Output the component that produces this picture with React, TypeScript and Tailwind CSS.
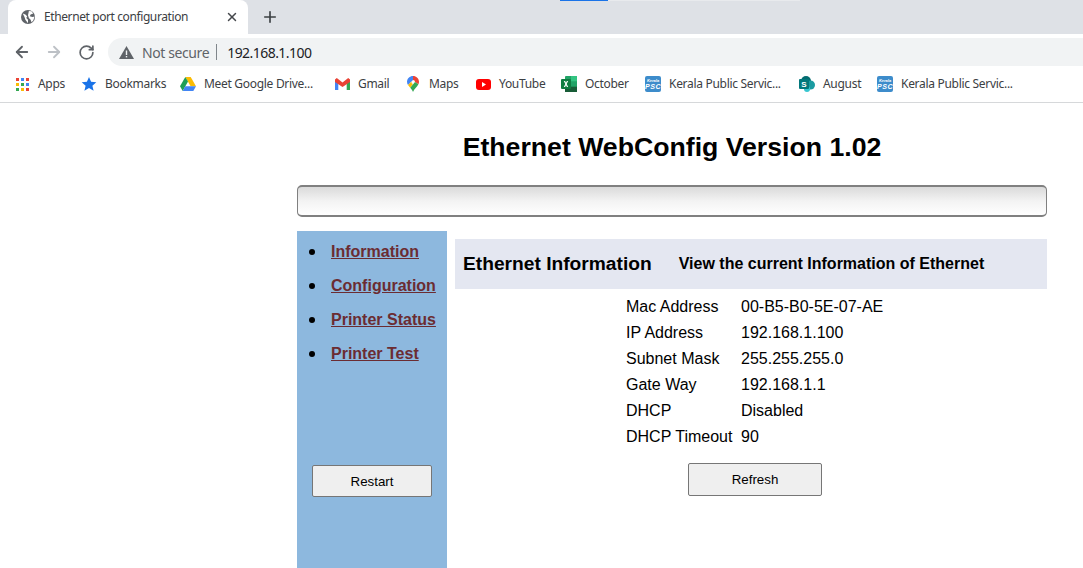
import React from 'react';
import { ArrowLeft, ArrowRight, RotateCw, Plus, X } from 'lucide-react';

const chromeFont = "font-['Noto_Sans','Open_Sans',sans-serif]";

const AppsIcon = () => {
  const colors = ['#ea4335', '#4285f4', '#ea4335', '#fbbc04', '#34a853', '#4285f4', '#34a853', '#fbbc04', '#ea4335'];
  return (
    <div className="grid w-[13px] h-[13px] grid-cols-3 gap-[2px]">
      {colors.map((c, i) => (
        <span key={i} className="block w-[3px] h-[3px]" style={{ backgroundColor: c }} />
      ))}
    </div>
  );
};

const StarIcon = () => (
  <svg width="16" height="16" viewBox="0 0 16 16">
    <path d="M8 1l2.100 4.800 5.200.5-3.900 3.400 1.200 5.100L8 12.100l-4.600 2.700 1.200-5.100L.7 6.300l5.200-.5z" fill="#1a73e8" />
  </svg>
);

const DriveIcon = () => (
  <svg width="16" height="14" viewBox="0 0 16 14">
    <path d="M5.300 0h5.400l5.300 9.200h-5.400z" fill="#fbbc04" />
    <path d="M5.300 0l2.700 4.600L2.700 14 0 9.200z" fill="#1e9e57" />
    <path d="M5.300 9.200H16L13.300 14H2.700z" fill="#4285f4" />
  </svg>
);

const GmailIcon = () => (
  <svg width="15" height="12" viewBox="0 0 15 12">
    <path d="M0 1.500V12h3.300V4z" fill="#4285f4" />
    <path d="M15 1.500V12h-3.300V4z" fill="#34a853" />
    <path d="M0 1.500L1.800 0 7.500 4.500 13.200 0 15 1.500V4L7.500 9 0 4z" fill="#ea4335" />
  </svg>
);

const MapsIcon = () => (
  <svg width="12" height="16" viewBox="0 0 12 16">
    <path d="M6 0C2.700 0 0 2.600 0 5.800c0 1.200.4 2.300 1 3.200L6 4z" fill="#4285f4" />
    <path d="M6 0c3.300 0 6 2.600 6 5.800 0 .9-.2 1.700-.6 2.400L8 6a2 2 0 00-2-2z" fill="#ea4335" />
    <path d="M1 9l3.500-3.500A2 2 0 006 8L3.200 11.800z" fill="#fbbc04" />
    <path d="M11.400 8.200C10 11 7.300 12.500 6 16c-.6-1.700-1.700-3-2.800-4.200L8 6z" fill="#34a853" />
  </svg>
);

const YouTubeIcon = () => (
  <svg width="15" height="11" viewBox="0 0 15 11">
    <rect width="15" height="11" rx="3" fill="#ff0000" />
    <path d="M6 3l4 2.500-4 2.500z" fill="#fff" />
  </svg>
);

const ExcelIcon = () => (
  <svg width="16" height="16" viewBox="0 0 16 16">
    <rect x="4" width="12" height="16" rx="1" fill="#21a366" />
    <rect x="10" width="6" height="5.300" fill="#33c481" />
    <rect x="4" y="10.700" width="12" height="5.300" fill="#185c37" />
    <rect y="3" width="10" height="10" rx="1" fill="#107c41" />
    <path d="M2.800 5h1.300L5 6.700 5.900 5h1.300L5.700 8l1.500 3H5.900L5 9.300 4.100 11H2.800l1.500-3z" fill="#fff" />
  </svg>
);

const PscIcon = () => (
  <div className="flex flex-col items-center justify-center w-4 h-4 rounded-[2px] bg-[#3d8ccb] text-white font-['Liberation_Sans',sans-serif] font-bold italic leading-none">
    <span className="text-[4px] leading-[5px]">Kerala</span>
    <span className="text-[7px] leading-[8px] tracking-[0.5px]">PSC</span>
  </div>
);

const SharePointIcon = () => (
  <svg width="16" height="16" viewBox="0 0 16 16">
    <circle cx="7" cy="5" r="5" fill="#036c70" />
    <circle cx="11.500" cy="9" r="4.500" fill="#1a9ba1" />
    <circle cx="8" cy="13" r="3" fill="#37c6d0" />
    <rect y="3" width="10" height="10" rx="1" fill="#03787c" />
    <text x="5" y="11" textAnchor="middle" fontSize="8" fontWeight="700" fill="#fff" fontFamily="Liberation Sans">S</text>
  </svg>
);

const bookmarks = [
  { icon: <AppsIcon />, label: 'Apps', w: 'w-[67px]' },
  { icon: <StarIcon />, label: 'Bookmarks', w: 'w-[99px]' },
  { icon: <DriveIcon />, label: 'Meet Google Drive...', w: 'w-[154px]' },
  { icon: <GmailIcon />, label: 'Gmail', w: 'w-[71px]' },
  { icon: <MapsIcon />, label: 'Maps', w: 'w-[70px]' },
  { icon: <YouTubeIcon />, label: 'YouTube', w: 'w-[86px]' },
  { icon: <ExcelIcon />, label: 'October', w: 'w-[84px]' },
  { icon: <PscIcon />, label: 'Kerala Public Servic...', w: 'w-[154px]' },
  { icon: <SharePointIcon />, label: 'August', w: 'w-[78px]' },
  { icon: <PscIcon />, label: 'Kerala Public Servic...', w: 'w-[150px]' },
];

const info = [
  ['Mac Address', '00-B5-B0-5E-07-AE'],
  ['IP Address', '192.168.1.100'],
  ['Subnet Mask', '255.255.255.0'],
  ['Gate Way', '192.168.1.1'],
  ['DHCP', 'Disabled'],
  ['DHCP Timeout', '90'],
];

const navLinks = ['Information', 'Configuration', 'Printer Status', 'Printer Test'];

export default function App() {
  return (
    <div className="w-[1083px] h-[568px] overflow-hidden bg-white flex flex-col font-['Liberation_Sans',sans-serif]">
      {/* Browser chrome */}
      <div className={`flex flex-col ${chromeFont}`}>
        <div className="relative h-[34px] bg-[#dee1e6] flex pl-2">
          <div className="w-[240px] h-[34px] bg-white rounded-t-lg flex items-center pl-[13px] pr-[9px]">
            <svg width="14" height="14" viewBox="0 0 16 16">
              <circle cx="8" cy="8" r="8" fill="#5f6368" />
              <path d="M2 4l3 1 2 2-1 2 2 2v4L5 11 4 8zM9 1l3 .5 2 2.500-3 1-1 2 3 1 2.500-.5L14 12l-2 2-1-3-2-2-1-3z" fill="#fff" />
            </svg>
            <span className="ml-[9px] flex-1 text-[12px] text-[#3c4043] tracking-[-0.4px] whitespace-nowrap">Ethernet port configuration</span>
            <X size={14} strokeWidth={2.5} className="text-[#45484c]" />
          </div>
          <div className="ml-[13px] h-[34px] flex items-center">
            <Plus size={18} strokeWidth={2.2} className="text-[#3c4043]" />
          </div>
          <div className="absolute top-0 left-[560px] w-[48px] h-px bg-[#1a73e8]" />
          <div className="absolute top-0 left-[608px] w-[192px] h-px bg-[#e8eaed]" />
        </div>
        <div className="h-[32px] bg-white flex items-center pt-1">
          <ArrowLeft size={18} strokeWidth={2.4} className="ml-[13px] text-[#5f6368]" />
          <ArrowRight size={18} strokeWidth={2.4} className="ml-[14px] text-[#bdc1c6]" />
          <RotateCw size={17} strokeWidth={2.4} className="ml-[15px] text-[#5f6368]" />
          <div className="ml-[13px] flex-1 h-[28px] rounded-l-[14px] bg-[#f1f3f4] flex items-center pl-[11px]">
            <svg width="15" height="13" viewBox="0 0 15 13">
              <path d="M7.500 0L15 13H0z" fill="#5f6368" />
              <rect x="6.800" y="4.500" width="1.400" height="4.500" fill="#f1f3f4" />
              <rect x="6.800" y="10" width="1.400" height="1.400" fill="#f1f3f4" />
            </svg>
            <span className="ml-[8px] text-[14px] text-[#5f6368] tracking-[-0.4px]">Not secure</span>
            <div className="ml-[7px] w-px h-[16px] bg-[#80868b]" />
            <span className="ml-[10px] text-[14px] text-[#202124] tracking-[-0.55px]">192.168.1.100</span>
          </div>
        </div>
        <div className="h-[37px] bg-white border-b border-[#d6d8da] flex items-center pl-[14px]">
          {bookmarks.map((b, i) => (
            <div key={i} className={`flex items-center shrink-0 ${b.w}`}>
              <div className="w-4 h-4 flex items-center justify-center">{b.icon}</div>
              <span className="ml-[8px] text-[12px] text-[#3c4043] tracking-[-0.3px] whitespace-nowrap">{b.label}</span>
            </div>
          ))}
        </div>
      </div>

      {/* Page */}
      <div className="ml-[297px] w-[750px] flex-1 flex flex-col">
        <h1 className="mt-[28px] h-[33px] text-center text-[26.67px] leading-[33px] font-bold text-black">Ethernet WebConfig Version 1.02</h1>
        <div className="mt-[21px] h-[32px] rounded-[5px] border-x border-y-2 border-[#808080] bg-linear-to-b from-[#dadada] via-[#f3f3f3] to-white" />
        <div className="mt-[14px] flex-1 flex">
          <div className="w-[150px] bg-[#8db8de] flex flex-col">
            <ul className="pt-[4px] pl-[12px]">
              {navLinks.map((l) => (
                <li key={l} className="h-[34px] flex items-center">
                  <span className="w-[6px] h-[6px] rounded-full bg-black" />
                  <a className="ml-[16px] font-bold text-[16px] text-[#6b2c32] underline whitespace-nowrap">{l}</a>
                </li>
              ))}
            </ul>
            <button className="mt-[94px] ml-[15px] w-[120px] h-[32px] pt-[1px] bg-[#efefef] border border-[#767676] rounded-[2px] text-[13.330px] text-black">Restart</button>
          </div>
          <div className="ml-2 flex-1 pt-2 flex flex-col">
            <div className="h-[50px] bg-[#e4e7f1] flex items-center pl-2 text-black font-bold">
              <span className="text-[19.2px]">Ethernet Information</span>
              <span className="ml-[27px] text-[16px]">View the current Information of Ethernet</span>
            </div>
            <div className="mt-[5px] ml-[171px] flex flex-col">
              {info.map(([k, v]) => (
                <div key={k} className="flex h-[26px] items-center text-[16px] text-black">
                  <span className="w-[115px]">{k}</span>
                  <span>{v}</span>
                </div>
              ))}
            </div>
            <button className="mt-[13px] ml-[233px] w-[134px] h-[33px] bg-[#efefef] border border-[#767676] rounded-[2px] text-[13.330px] text-black">Refresh</button>
          </div>
        </div>
      </div>
    </div>
  );
}
